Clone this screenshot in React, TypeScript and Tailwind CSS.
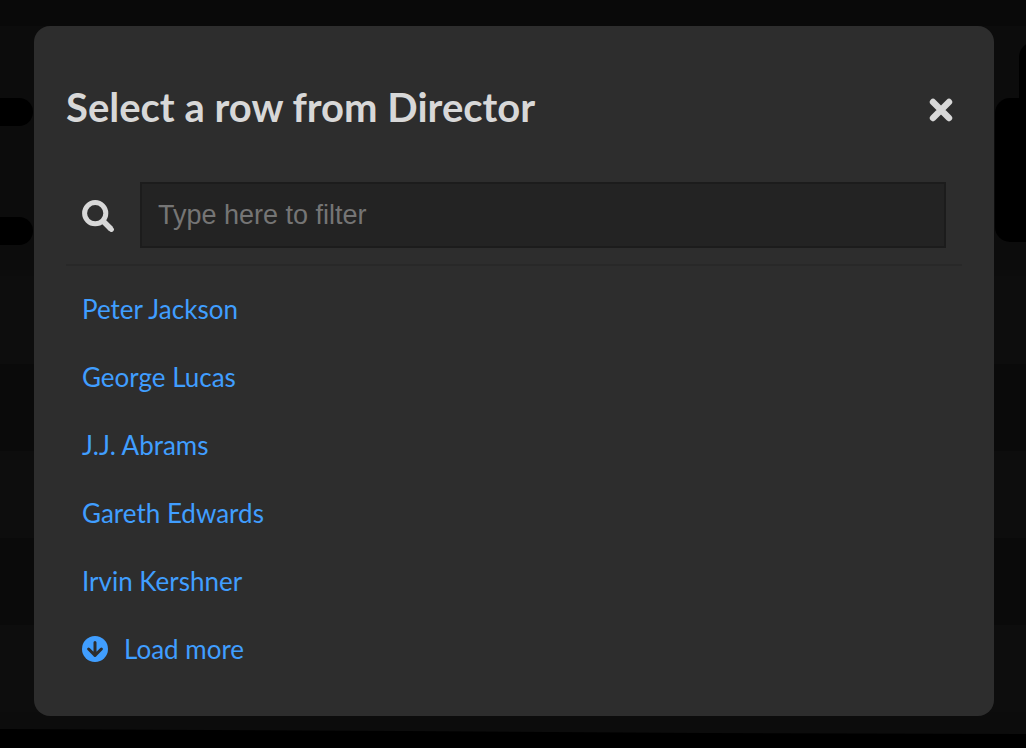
const directors = [
  "Peter Jackson",
  "George Lucas",
  "J.J. Abrams",
  "Gareth Edwards",
  "Irvin Kershner",
];

function CloseIcon() {
  return (
    <svg width="24" height="24" viewBox="0 0 24 24" fill="none" aria-hidden="true">
      <path d="M4 4l16 16M20 4L4 20" stroke="currentColor" strokeWidth="6.4" strokeLinecap="round" />
    </svg>
  );
}

function SearchIcon() {
  return (
    <svg width="32" height="34" viewBox="0 0 32 34" fill="none" stroke="currentColor" aria-hidden="true">
      <circle cx="13.2" cy="15.2" r="10.6" strokeWidth="5" />
      <path d="M21 23l8 8" strokeWidth="5.4" />
      <path d="M28 30l1.4 1.4" strokeWidth="5" strokeLinecap="round" />
    </svg>
  );
}

function ArrowDownCircleIcon() {
  return (
    <svg width="26" height="26" viewBox="0 0 26 26" fill="none" aria-hidden="true">
      <circle cx="13" cy="13" r="13" fill="currentColor" />
      <path
        d="M13 6.4v13M6.6 13l6.4 6.4 6.4-6.4"
        stroke="#2d2d2d"
        strokeWidth="3"
        strokeLinecap="round"
        strokeLinejoin="round"
      />
    </svg>
  );
}

function Backdrop() {
  return (
    <svg
      aria-hidden="true"
      className="absolute inset-0 -z-10 h-full w-full bg-[#0c0c0c]"
      viewBox="0 0 1026 748"
      preserveAspectRatio="none"
    >
      <path d="M0 0h1026v26H0z" fill="#090909" />
      <path d="M0 276h1026v88H0zM0 451h1026v87H0zM0 625h1026v87H0z" fill="#0d0d0d" />
      <path d="M0 364h1026v87H0zM0 538h1026v87H0z" fill="#0a0a0a" />
      <rect x="-20" y="98" width="53" height="28" rx="14" />
      <rect x="-20" y="217" width="53" height="28" rx="14" />
      <rect x="995" y="98" width="50" height="144" rx="15" />
      <rect x="1019" y="42" width="40" height="100" rx="15" />
      <path d="M0 729l400 2 300 2 326 1v14H0z" />
    </svg>
  );
}

export default function App() {
  return (
    <div className="relative isolate min-h-screen pt-[26px] pr-8 pb-8 pl-[34px] font-['Lato','Noto_Sans',sans-serif]">
      <Backdrop />
      <section
        role="dialog"
        aria-labelledby="dialog-title"
        className="rounded-2xl bg-[#2d2d2d] p-8"
      >
        <header className="flex h-[108px] items-center justify-between pr-[9px] pb-1 text-[#d8d8d8]">
          <h1 id="dialog-title" className="pb-1.5 text-[40px] leading-[48px] font-bold">
            Select a row from Director
          </h1>
          <button type="button" aria-label="Close">
            <CloseIcon />
          </button>
        </header>
        <div className="flex items-center gap-[26px] border-b-2 border-[#282828] p-4">
          <label htmlFor="row-filter" aria-label="Filter rows" className="text-[#d8d8d8]">
            <SearchIcon />
          </label>
          <input
            id="row-filter"
            type="text"
            placeholder="Type here to filter"
            className="h-[66px] min-w-0 flex-1 border-2 border-[#1c1c1c] bg-[#232323] px-4 font-['Liberation_Sans',Arial,sans-serif] text-[27px] text-[#d8d8d8] outline-none placeholder:text-[#757575]"
          />
        </div>
        <ul className="pt-[9px] pb-px text-[26px] leading-9 text-[#409eff]">
          {directors.map((name) => (
            <li key={name} className="flex h-[68px] items-center px-4">
              <a href="#">{name}</a>
            </li>
          ))}
          <li className="flex h-[68px] items-center px-4">
            <button type="button" className="flex items-center gap-4">
              <ArrowDownCircleIcon />
              Load more
            </button>
          </li>
        </ul>
      </section>
    </div>
  );
}
